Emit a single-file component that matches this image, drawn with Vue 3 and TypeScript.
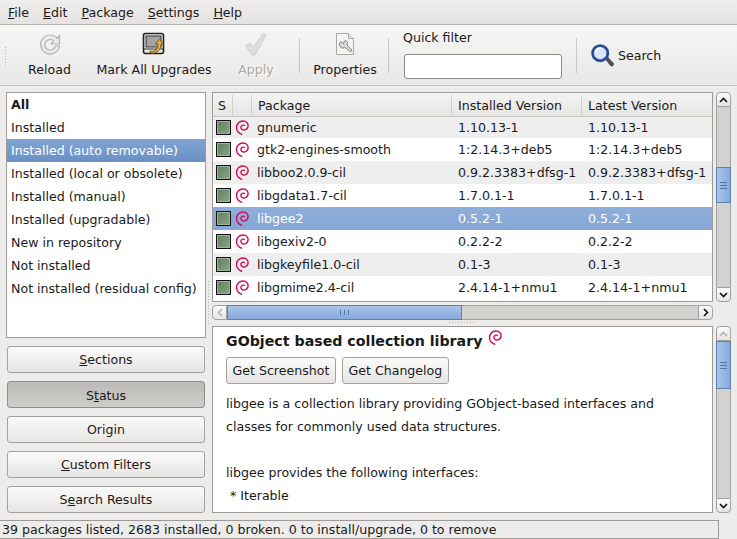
<script setup lang="ts">
interface Pkg {
  name: string
  installed: string
  latest: string
}

const menus = [
  { key: 'F', rest: 'ile' },
  { key: 'E', rest: 'dit' },
  { key: 'P', rest: 'ackage' },
  { key: 'S', rest: 'ettings' },
  { key: 'H', rest: 'elp' },
]

const filters = [
  'Installed',
  'Installed (auto removable)',
  'Installed (local or obsolete)',
  'Installed (manual)',
  'Installed (upgradable)',
  'New in repository',
  'Not installed',
  'Not installed (residual config)',
]

const sideButtons = [
  { before: '', key: 'S', after: 'ections', active: false },
  { before: 'S', key: 't', after: 'atus', active: true },
  { before: 'Origin', key: '', after: '', active: false },
  { before: '', key: 'C', after: 'ustom Filters', active: false },
  { before: 'S', key: 'e', after: 'arch Results', active: false },
]

const packages: Pkg[] = [
  { name: 'gtk2-engines-smooth', installed: '1:2.14.3+deb5', latest: '1:2.14.3+deb5' },
  { name: 'libboo2.0.9-cil', installed: '0.9.2.3383+dfsg-1', latest: '0.9.2.3383+dfsg-1' },
  { name: 'libgdata1.7-cil', installed: '1.7.0.1-1', latest: '1.7.0.1-1' },
  { name: 'libgee2', installed: '0.5.2-1', latest: '0.5.2-1' },
  { name: 'libgexiv2-0', installed: '0.2.2-2', latest: '0.2.2-2' },
  { name: 'libgkeyfile1.0-cil', installed: '0.1-3', latest: '0.1-3' },
  { name: 'libgmime2.4-cil', installed: '2.4.14-1+nmu1', latest: '2.4.14-1+nmu1' },
]

const swirl = 'M7.2 14.5C3.8 13.200 1.500 10.600 1.500 7.500 1.500 3.600 4.500 1 8 1c3.500 0 5.500 2.500 5 5.500-.5 2.500-3 4-5.200 3.300-1.800-.6-2.300-2.300-1.500-3.600.7-1.200 2.500-1.400 3.500-.4'
</script>

<template>
  <div class="window">
    <nav class="menubar">
      <span v-for="m in menus" :key="m.key" class="menu"><u>{{ m.key }}</u>{{ m.rest }}</span>
    </nav>

    <header class="toolbar">
      <div class="grip"></div>

      <div class="tool reload">
        <svg width="24" height="24" viewBox="0 0 24 24">
          <path d="M19.500 6.500A9.500 9.500 0 1 0 21.500 14h-4.200a5.300 5.300 0 1 1-1.700-5.200L13 12h8.500V3z" fill="#e9e9e6" stroke="#b4b4b0" stroke-width="1.200" stroke-linejoin="round" />
        </svg>
        <span>Reload</span>
      </div>

      <div class="tool upgrades">
        <svg width="24" height="24" viewBox="0 0 24 24">
          <rect x="1.500" y="1.500" width="20" height="20" rx="2" fill="#e8e8e4" stroke="#222" stroke-width="1.600" />
          <rect x="4" y="4" width="15" height="11" fill="#a4a4a6" stroke="#333" />
          <path d="M2 17h19" stroke="#333" />
          <path d="M8 19c5 1 8-1 8-7h-2.500l4-4.500 4 4.500H19c0 6-4 10-11 9z" fill="#e9b63c" stroke="#6b4a0c" stroke-width=".9" stroke-linejoin="round" />
        </svg>
        <span>Mark All Upgrades</span>
      </div>

      <div class="tool apply disabled">
        <svg width="24" height="24" viewBox="0 0 24 24">
          <path d="M1.500 14l4-3 4 4L19.500 1l3 1.500L11 23H8z" fill="#dededb" stroke="#d2d2ce" stroke-linejoin="round" />
        </svg>
        <span>Apply</span>
      </div>

      <div class="vsep"></div>

      <div class="tool properties">
        <svg width="24" height="24" viewBox="0 0 24 24">
          <path d="M3.500 1.500h12l5 5v16h-17z" fill="#f4f4f1" stroke="#a9a9a5" stroke-linejoin="round" />
          <path d="M15.500 1.500v5h5" fill="#e0e0dc" stroke="#a9a9a5" />
          <path d="M8 9.500l2.500 2.500.5-2.500 2-1a3.500 3.500 0 0 1 1 4.500l5 5-1.500 2-5.500-4.500A3.600 3.600 0 0 1 8 9.500z" fill="#d8d8d4" stroke="#8a8a86" stroke-linejoin="round" />
        </svg>
        <span>Properties</span>
      </div>

      <div class="vsep"></div>

      <div class="quick">
        <label>Quick filter</label>
        <div class="entry"></div>
      </div>

      <div class="vsep"></div>

      <div class="search">
        <svg width="24" height="24" viewBox="0 0 24 24">
          <path d="M15.500 16l2-2 5.500 6a1.500 1.500 0 0 1-2.500 2.500z" fill="#55534e" stroke="#33322e" stroke-width=".7" />
          <circle cx="10.200" cy="10.200" r="7.600" fill="#d9e5f4" stroke="#2b4d96" stroke-width="2.800" />
          <path d="M5.500 9a5 5 0 0 1 5-4" fill="none" stroke="#fff" stroke-width="1.400" />
        </svg>
        <span>Search</span>
      </div>
    </header>

    <main class="content">
      <aside class="left">
        <ul class="filter-list">
          <li class="all">All</li>
          <li v-for="(f, i) in filters" :key="f" :class="{ sel: i === 1 }">{{ f }}</li>
        </ul>
        <div class="side-buttons">
          <div v-for="b in sideButtons" :key="b.before + b.after" class="btn side" :class="{ active: b.active }">
            {{ b.before }}<u v-if="b.key">{{ b.key }}</u>{{ b.after }}
          </div>
        </div>
      </aside>

      <section class="right">
        <div class="top-pane">
          <div class="table-row-wrap">
            <div class="table">
              <div class="thead">
                <div class="th">S</div>
                <div class="th"></div>
                <div class="th">Package</div>
                <div class="th">Installed Version</div>
                <div class="th last">Latest Version</div>
              </div>
              <div class="tr first odd">
                <div class="status"></div>
                <svg class="swirl" width="15" height="15" viewBox="0 0 15 15"><path :d="swirl" /></svg>
                <span class="name">gnumeric</span>
                <span class="ver">1.10.13-1</span>
                <span class="ver">1.10.13-1</span>
              </div>
              <div
                v-for="(p, i) in packages"
                :key="p.name"
                class="tr"
                :class="{ odd: i % 2 === 1, sel: p.name === 'libgee2' }"
              >
                <div class="status"></div>
                <svg class="swirl" width="15" height="15" viewBox="0 0 15 15"><path :d="swirl" /></svg>
                <span class="name">{{ p.name }}</span>
                <span class="ver">{{ p.installed }}</span>
                <span class="ver">{{ p.latest }}</span>
              </div>
            </div>
            <div class="vscroll">
              <div class="arrow up"><svg width="9" height="6" viewBox="0 0 9 6"><path d="M1 5l3.500-3.500L8 5" /></svg></div>
              <div class="track table-track"><div class="thumb small"><i></i></div></div>
              <div class="arrow down"><svg width="9" height="6" viewBox="0 0 9 6"><path d="M1 1l3.500 3.500L8 1" /></svg></div>
            </div>
          </div>
          <div class="hscroll">
            <div class="harrow left-a"><svg width="6" height="9" viewBox="0 0 6 9"><path d="M5 1L1.500 4.500 5 8" /></svg></div>
            <div class="htrack"><div class="hthumb"><i></i></div></div>
            <div class="harrow right-a"><svg width="6" height="9" viewBox="0 0 6 9"><path d="M1 1l3.500 3.500L1 8" /></svg></div>
          </div>
        </div>

        <div class="detail-wrap">
          <article class="detail">
            <h1>
              GObject based collection library
              <svg class="swirl head" width="15" height="15" viewBox="0 0 15 15"><path :d="swirl" /></svg>
            </h1>
            <div class="detail-buttons">
              <div class="btn small-btn">Get Screenshot</div>
              <div class="btn small-btn">Get Changelog</div>
            </div>
            <p>libgee is a collection library providing GObject-based interfaces and</p>
            <p>classes for commonly used data structures.</p>
            <p>&nbsp;</p>
            <p>libgee provides the following interfaces:</p>
            <p>&nbsp;* Iterable</p>
            <p>&nbsp;&nbsp;&nbsp;* Collection</p>
          </article>
          <div class="vscroll">
            <div class="arrow up dim"><svg width="9" height="6" viewBox="0 0 9 6"><path d="M1 5l3.500-3.500L8 5" /></svg></div>
            <div class="track"><div class="thumb tall"><i></i></div></div>
            <div class="arrow down"><svg width="9" height="6" viewBox="0 0 9 6"><path d="M1 1l3.500 3.500L8 1" /></svg></div>
          </div>
        </div>
      </section>

      <div class="handle vertical"></div>
      <div class="handle horizontal"></div>
    </main>

    <footer class="statusbar">
      <div class="status-text">39 packages listed, 2683 installed, 0 broken. 0 to install/upgrade, 0 to remove</div>
    </footer>
  </div>
</template>

<style>
html,
body {
  margin: 0;
  background: #edeceb;
}
</style>

<style scoped>
.window {
  width: 737px;
  height: 539px;
  overflow: hidden;
  display: flex;
  flex-direction: column;
  background: #edeceb;
  color: #1a1a1a;
  font-family: "DejaVu Sans", sans-serif;
  font-size: 12.6px;
}

.menubar {
  height: 24px;
  flex: none;
  display: flex;
  gap: 14px;
  padding-left: 8px;
  align-items: center;
  background: linear-gradient(#efeeed, #e4e3e1);
  border-bottom: 1px solid #b8b6b2;
}

.toolbar {
  height: 60px;
  flex: none;
  display: flex;
  background: linear-gradient(#f6f6f5, #e9e8e6);
  border-bottom: 1px solid #c6c4c0;
}

.grip {
  width: 4px;
  height: 20px;
  margin: 21px 0 0 4px;
  background-image: radial-gradient(#b5b3ae 0.7px, transparent 0.8px);
  background-size: 3px 3px;
}

.tool {
  display: flex;
  flex-direction: column;
  align-items: center;
  padding-top: 7px;
  box-sizing: border-box;
  height: 60px;
  white-space: nowrap;
}

.tool svg {
  height: 24px;
  margin-bottom: 6px;
}

.reload { width: 61px; margin-left: 11px; }
.upgrades { width: 128px; margin-left: 10px; }
.apply { width: 42px; margin-left: 17px; }
.properties { width: 66px; margin-left: 12px; }
.disabled span { color: #a9a8a5; text-shadow: 1px 1px 0 #fff; }

.vsep {
  width: 1px;
  height: 35px;
  margin-top: 13px;
  background: #c9c8c5;
  flex: none;
}

.apply + .vsep { margin-left: 22px; }
.properties + .vsep { margin-left: 10px; }

.quick {
  width: 159px;
  margin-left: 14px;
  padding-top: 5px;
}

.quick label {
  display: block;
  line-height: 16px;
}

.entry {
  width: 156px;
  height: 23px;
  margin: 8px 0 0 1px;
  border: 1px solid #8c8a86;
  border-radius: 3px;
  background: #fff;
}

.quick + .vsep { margin-left: 14px; }

.search {
  display: flex;
  align-items: center;
  gap: 4px;
  height: 32px;
  margin: 14px 0 0 13px;
}

.content {
  flex: 1;
  min-height: 0;
  display: flex;
  padding: 6px 6px 5px 6px;
  gap: 6px;
  position: relative;
}

.left {
  width: 200px;
  flex: none;
  display: flex;
  flex-direction: column;
}

.filter-list {
  margin: 0;
  padding: 0;
  list-style: none;
  height: 246px;
  background: #fff;
  border: 1px solid #9d9b97;
  box-sizing: border-box;
  flex: none;
}

.filter-list li {
  height: 23px;
  line-height: 23px;
  padding-left: 4px;
  white-space: nowrap;
}

.filter-list .all { font-weight: bold; }

.filter-list .sel {
  background: linear-gradient(#7fa3d3, #6a91c4);
  color: #fff;
}

.side-buttons {
  margin-top: 8px;
  display: flex;
  flex-direction: column;
  gap: 8px;
  padding: 0 1px;
}

.btn {
  border: 1px solid #a3a19d;
  border-radius: 3px;
  background: linear-gradient(#fbfbfa, #e6e5e3);
  box-sizing: border-box;
  text-align: center;
  white-space: nowrap;
}

.btn.side {
  height: 27px;
  line-height: 25px;
}

.btn.side.active {
  background: linear-gradient(#bcbab6, #cfcdca);
  border-color: #8f8d89;
  line-height: 27px;
}

.right {
  flex: 1;
  min-width: 0;
  display: flex;
  flex-direction: column;
}

.top-pane {
  height: 228px;
  flex: none;
}

.table-row-wrap,
.detail-wrap {
  display: flex;
  gap: 3px;
}

.table-row-wrap { height: 210px; }

.table {
  width: 501px;
  flex: none;
  border: 1px solid #9d9b97;
  background: #fff;
  box-sizing: border-box;
  overflow: hidden;
}

.thead,
.tr {
  display: grid;
  grid-template-columns: 20px 19px 200px 130px 130px;
}

.thead {
  height: 24px;
  background: linear-gradient(#f4f4f3, #e6e5e3);
  border-bottom: 1px solid #c8c6c2;
  box-sizing: border-box;
}

.th {
  padding-left: 5px;
  border-right: 1px solid #d2d0cc;
  margin: 2px 0;
  line-height: 22px;
  white-space: nowrap;
}

.th.last { border-right: none; }
.th:nth-child(n + 3) { padding-left: 6px; }

.tr {
  height: 23px;
  align-items: center;
  white-space: nowrap;
}

.tr.first { height: 21px; }
.tr.odd { background: #eeeeee; }
.tr.sel {
  background: linear-gradient(#8eaedb, #86a6d3);
  color: #fff;
}

.status {
  width: 13px;
  height: 13px;
  margin-left: 3px;
  border: 1px solid #111;
  background: linear-gradient(135deg, #5f7f5f, #8aa587);
  box-shadow: inset 0 0 0 1px #9cb39a;
}

.swirl {
  margin-left: 2px;
  fill: none;
  stroke: #d70a53;
  stroke-width: 1.400;
}

.swirl.head { margin-left: 1px; vertical-align: 1px; }
.name { padding-left: 5px; }
.ver { padding-left: 6px; }

.vscroll {
  width: 15px;
  flex: none;
  display: flex;
  flex-direction: column;
  height: 100%;
}

.arrow {
  height: 15px;
  flex: none;
  background: linear-gradient(#fbfbfa, #e6e5e3);
  border: 1px solid #a3a19d;
  box-sizing: border-box;
  display: flex;
  align-items: center;
  justify-content: center;
}

.arrow svg,
.harrow svg {
  fill: none;
  stroke: #111;
  stroke-width: 1.600;
}

.arrow.dim svg { stroke: #b5b4b1; }
.arrow.up { border-radius: 4px 4px 0 0; }
.arrow.down { border-radius: 0 0 4px 4px; }

.track {
  flex: 1;
  min-height: 0;
  background: #d3d2cf;
  border-left: 1px solid #a3a19d;
  border-right: 1px solid #a3a19d;
}

.table-track { padding-top: 60px; }

.thumb {
  background: linear-gradient(90deg, #a9c4e8, #85a9dc);
  border: 1px solid #5a80b4;
  margin: 0 -1px;
  display: flex;
  align-items: center;
  justify-content: center;
  box-sizing: border-box;
}

.thumb i {
  width: 7px;
  height: 5px;
  border-top: 1px solid #4f74a8;
  border-bottom: 1px solid #4f74a8;
  background: linear-gradient(#4f74a8, #4f74a8) center / 100% 1px no-repeat;
}

.thumb.small { height: 36px; }
.thumb.tall { height: 48px; }

.hscroll {
  margin-top: 3px;
  height: 15px;
  width: 501px;
  display: flex;
}

.harrow {
  width: 15px;
  flex: none;
  background: linear-gradient(#fbfbfa, #e6e5e3);
  border: 1px solid #a3a19d;
  box-sizing: border-box;
  display: flex;
  align-items: center;
  justify-content: center;
}

.harrow.left-a { border-radius: 4px 0 0 4px; }
.harrow.left-a svg { stroke: #b5b4b1; }
.harrow.right-a { border-radius: 0 4px 4px 0; }

.htrack {
  flex: 1;
  background: #d3d2cf;
  border-top: 1px solid #a3a19d;
  border-bottom: 1px solid #a3a19d;
}

.hthumb {
  width: 235px;
  height: 15px;
  margin-top: -1px;
  background: linear-gradient(#a9c4e8, #85a9dc);
  border: 1px solid #5a80b4;
  box-sizing: border-box;
  display: flex;
  align-items: center;
  justify-content: center;
}

.hthumb i {
  width: 7px;
  height: 5px;
  border-left: 1px solid #4f74a8;
  border-right: 1px solid #4f74a8;
  background: linear-gradient(#4f74a8, #4f74a8) center / 1px 100% no-repeat;
}

.detail-wrap {
  margin-top: 6px;
  height: 187px;
}

.detail {
  width: 501px;
  flex: none;
  box-sizing: border-box;
  height: 187px;
  overflow: hidden;
  background: #fff;
  border: 1px solid #9d9b97;
  padding: 3px 13px;
}

.detail h1 {
  margin: 0;
  height: 20px;
  font-size: 14.2px;
  line-height: 20px;
  font-weight: bold;
  white-space: nowrap;
}

.detail-buttons {
  display: flex;
  gap: 6px;
  margin: 7px 0 8px;
}

.small-btn {
  height: 27px;
  line-height: 25px;
  padding: 0 5.5px;
}

.detail p {
  margin: 0;
  height: 23px;
  line-height: 23px;
  white-space: nowrap;
}

.handle {
  position: absolute;
  background-image: radial-gradient(#b5b3ae 0.7px, transparent 0.8px);
  background-size: 3px 3px;
}

.handle.vertical {
  left: 207px;
  top: 194px;
  width: 4px;
  height: 46px;
}

.handle.horizontal {
  left: 448px;
  top: 235px;
  width: 28px;
  height: 4px;
}

.statusbar {
  flex: none;
  height: 19px;
}

.status-text {
  width: 719px;
  height: 19px;
  border: 1px solid #9d9b97;
  border-left: none;
  box-sizing: border-box;
  line-height: 17px;
  padding-left: 2px;
  white-space: nowrap;
}
</style>
